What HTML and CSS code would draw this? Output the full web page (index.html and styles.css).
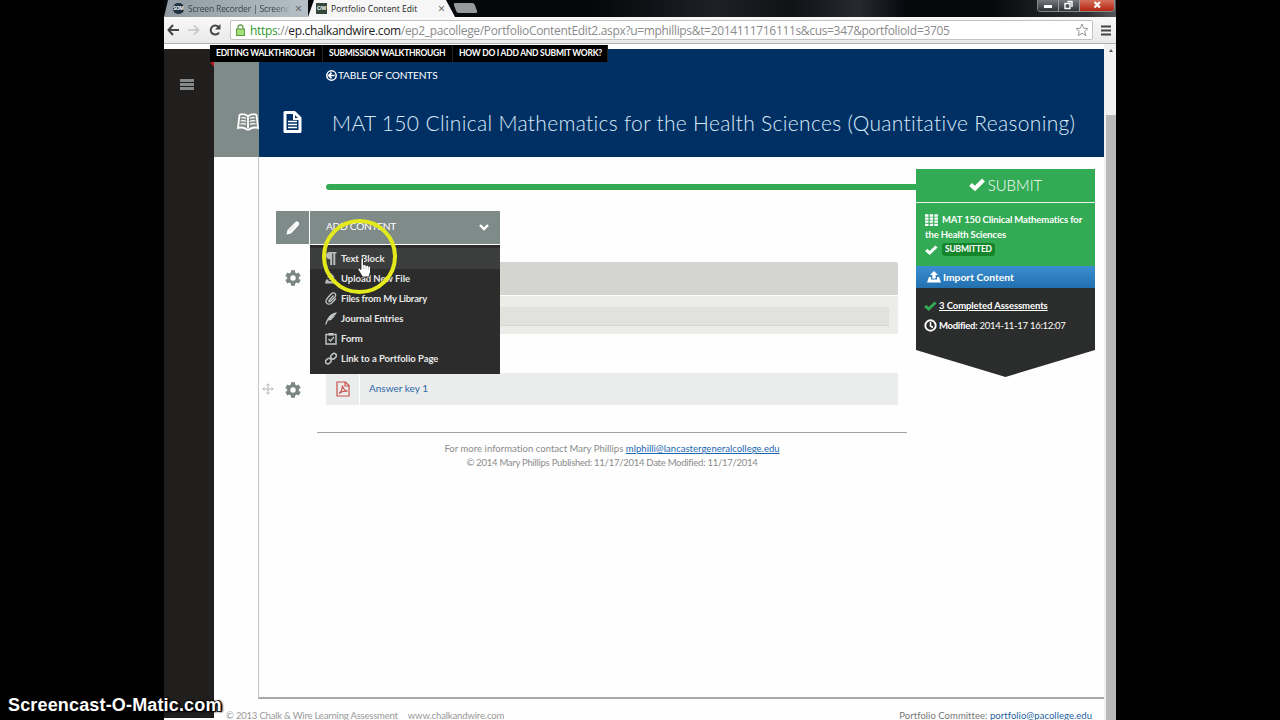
FILE: index.html
```
<!DOCTYPE html>
<html lang="en">
<head>
  <meta charset="UTF-8">
  <meta name="viewport" content="width=device-width, initial-scale=1.0">
  <link rel="stylesheet" href="styles.css">
  <title>Portfolio Content Edit</title>
</head>
<body>

<div class="browser">
  <div class="tabs">
    <div class="tab tab-back">
      <span class="favicon favicon-som">SOM</span>
      <span class="tab-title fade">Screen Recorder | Screenc</span>
      <span class="tab-close">×</span>
    </div>
    <div class="tab tab-active">
      <span class="favicon favicon-cw">C/W</span>
      <span class="tab-title">Portfolio Content Edit</span>
      <span class="tab-close">×</span>
    </div>
    <div class="new-tab"></div>
    <div class="window-buttons">
      <span class="win"><svg width="20" height="12" viewBox="0 0 20 12"><path d="M6 5h8v3H6z" fill="#fff"/></svg></span>
      <span class="win"><svg width="20" height="12" viewBox="0 0 20 12" fill="none" stroke="#fff" stroke-width="1.4"><path d="M6 3.500h5v5H6zM8.500 1.500h4.500v5.500"/></svg></span>
      <span class="win win-close"><svg width="34" height="12" viewBox="0 0 34 12"><path d="M14.500 2l5.500 5.500M20 2l-5.500 5.500" stroke="#fff" stroke-width="2.200"/></svg></span>
    </div>
  </div>

  <div class="toolbar">
    <svg width="12" height="12" viewBox="0 0 12 12" fill="none" stroke="#444" stroke-width="2"><path d="M6 1L1.500 6L6 11M1.500 6H12"/></svg>
    <svg width="12" height="12" viewBox="0 0 12 12" fill="none" stroke="#c4c4c4" stroke-width="1.600"><path d="M6 1.500L10.500 6L6 10.500M10.500 6H0"/></svg>
    <svg width="12" height="12" viewBox="0 0 12 12" fill="none" stroke="#444" stroke-width="2"><path d="M10 8.500A4.500 4.500 0 1 1 9.500 3"/><path d="M11.500 0v5.500H6z" fill="#444" stroke="none"/></svg>
    <div class="address">
      <svg width="9" height="12" viewBox="0 0 9 12"><path d="M2 6V3.500a2.500 2.500 0 0 1 5 0V6" fill="none" stroke="#6a9e52" stroke-width="1.300"/><rect x=".5" y="5" width="8" height="6.500" fill="#a4e07a" stroke="#5b9a3f"/></svg>
      <span class="url"><span class="scheme">https</span>://<span class="host">ep.chalkandwire.com</span>/ep2_pacollege/PortfolioContentEdit2.aspx?u=mphillips&amp;t=2014111716111s&amp;cus=347&amp;portfolioId=3705</span>
      <svg width="14" height="14" viewBox="0 0 14 14"><path d="M7 1l1.700 4.200 4.300.3-3.300 2.800 1.100 4.400L7 10.200 3.200 12.700l1.100-4.400L1 5.500l4.300-.3z" fill="#fff" stroke="#999"/></svg>
    </div>
    <svg class="wrench" width="10" height="11" viewBox="0 0 10 11"><path d="M0 1.500h10M0 5.500h10M0 9.500h10" stroke="#444" stroke-width="2.200"/></svg>
  </div>

  <div class="page">
    <div class="walkthroughs">
      <a class="w1">EDITING WALKTHROUGH</a>
      <a class="w2">SUBMISSION WALKTHROUGH</a>
      <a class="w3">HOW DO I ADD AND SUBMIT WORK?</a>
      <i class="corner"></i>
    </div>

    <div class="sidebar">
      <svg width="14" height="11" viewBox="0 0 14 11"><path d="M0 1.500h14M0 5.500h14M0 9.500h14" stroke="#85898a" stroke-width="3"/></svg>
    </div>

    <div class="main">
      <div class="content">
        <div class="book-tab">
          <svg width="22" height="18" viewBox="0 0 22 18" fill="none" stroke="#fff" stroke-width="1.800"><path d="M11 3Q6 0 2.500 2L1 15Q6 13.500 10 16.500h2Q16 13.500 21 15L19.500 2Q16 0 11 3V15"/><path d="M4 5q3-1 5 .5M3.700 8q3-1 5.300.5M3.500 11q3-1 5.500.5M18 5q-3-1-5 .5M18.300 8q-3-1-5.300.5M18.500 11q-3-1-5.500.5" stroke-width="1.300"/></svg>
        </div>

        <div class="sheet">
          <div class="heading">
            <svg class="doc" width="19" height="22" viewBox="0 0 19 22"><path d="M2 1.500h9.500L17 7v13.500H2z" fill="#003063" stroke="#fff" stroke-width="3" stroke-linejoin="round"/><path d="M11 1v7h7" fill="none" stroke="#fff" stroke-width="2"/><path d="M5 10.500h9M5 13.500h9M5 16.500h9" stroke="#fff" stroke-width="1.500"/></svg>
            <div class="heading-text">
              <a class="toc"><svg width="11" height="11" viewBox="0 0 11 11" fill="none" stroke="#fff"><circle cx="5.500" cy="5.500" r="4.700" stroke-width="1.500"/><path d="M5.500 2.700L2.800 5.500l2.700 2.800M3 5.500h5.700" stroke-width="1.700"/></svg><span>TABLE OF CONTENTS</span></a>
              <h1>MAT 150 Clinical Mathematics for the Health Sciences (Quantitative Reasoning)</h1>
            </div>
          </div>

          <div class="body">
            <div class="blocks">
              <div class="progress"></div>

              <div class="add-bar">
                <div class="pencil"><svg width="16" height="16" viewBox="0 0 16 16"><path d="M1.500 14.500l1-4.500L10.500 2q1.500-1.500 3 0t0 3.500L6 13.500z" fill="#fff"/><path d="M4.500 11L10 5.500" stroke="#a9b2b0" stroke-width=".7"/></svg></div>
                <div class="add-content">
                  <span>ADD CONTENT</span>
                  <svg width="10" height="7" viewBox="0 0 10 7"><path d="M1 1l4 4 4-4" fill="none" stroke="#fff" stroke-width="2.400"/></svg>
                  <ul class="menu">
                    <li class="active"><svg width="12" height="13" viewBox="0 0 12 13"><path d="M11.500 0v1.500H10.300V13H8.300V1.500H7.200V13H5.200V7.200Q1 7 1 3.500T5 0z" fill="#b8bcbb"/></svg><span>Text Block</span></li>
                    <li><svg width="12" height="13" viewBox="0 0 12 13"><path d="M6 1l4 4.500H7.500V8h-3V5.500H2zM1 7.500h2.500v1.700h5V7.500H11l1 4H0z" fill="#b8bcbb"/></svg><span>Upload New File</span></li>
                    <li class="library"><svg width="12" height="13" viewBox="0 0 12 13"><path d="M8.500 3.500L4 8.500q-.5 1.500 1 1.200L10 5q1.500-2.500-.3-3.700T6 2L1.800 7Q0 10 2 11.500t4.500-.3L11 6.500" fill="none" stroke="#c2c6c5" stroke-width="1.300"/></svg><span>Files from My Library</span></li>
                    <li class="journal"><svg width="12" height="13" viewBox="0 0 12 13"><path d="M0 12.500Q2.500 5 6 2.500T12 .5Q10.500 2 10.500 3L8 4.200h2Q9 6 6 6.500h2Q6 9 3 8.500L1.300 12.500z" fill="#c2c6c5"/></svg><span>Journal Entries</span></li>
                    <li><svg width="12" height="13" viewBox="0 0 12 13"><path d="M1 2.500h10v9.500H1z" fill="none" stroke="#c2c6c5" stroke-width="1.400"/><path d="M3.500 1h5v2.500h-5z" fill="#c2c6c5"/><path d="M3.500 7l2 2 3.500-4" fill="none" stroke="#c2c6c5" stroke-width="1.300"/></svg><span>Form</span></li>
                    <li class="link"><svg width="12" height="13" viewBox="0 0 12 13"><g fill="none" stroke="#c2c6c5" stroke-width="1.500"><rect x="5.500" y="2" width="6" height="4.500" rx="2.200" transform="rotate(-45 8.500 4.200)"/><rect x=".3" y="6.900" width="6" height="4.500" rx="2.200" transform="rotate(-45 3.300 9.100)"/></g></svg><span>Link to a Portfolio Page</span></li>
                  </ul>
                </div>
              </div>

              <div class="row row-table">
                <svg class="gear" width="16" height="16" viewBox="0 0 16 16"><path d="M8 .3v15.400M1.300 4.150l13.400 7.700M1.300 11.850l13.400-7.700" stroke="#7b8684" stroke-width="4"/><circle cx="8" cy="8" r="4.300" fill="#fff" stroke="#7b8684" stroke-width="3.200"/></svg>
                <div class="table-block">
                  <div class="table-head"></div>
                  <div class="table-body"><div class="table-cell"></div></div>
                </div>
              </div>

              <div class="row row-file">
                <svg class="move" width="12" height="12" viewBox="0 0 12 12"><path d="M6 1v10M1 6h10M4.300 2.500L6 .8l1.700 1.700M4.300 9.500L6 11.200l1.700-1.700M2.500 4.300L.8 6l1.700 1.700M9.500 4.300L11.200 6 9.500 7.700" fill="none" stroke="#b3b7b7"/></svg>
                <svg class="gear" width="16" height="16" viewBox="0 0 16 16"><path d="M8 .3v15.400M1.300 4.150l13.400 7.700M1.300 11.850l13.400-7.700" stroke="#7b8684" stroke-width="4"/><circle cx="8" cy="8" r="4.300" fill="#fff" stroke="#7b8684" stroke-width="3.200"/></svg>
                <div class="file-block">
                  <div class="file-icon"><svg width="14" height="16" viewBox="0 0 14 16" fill="none" stroke="#c6524e" stroke-width="1.200"><path d="M1 1h8.500L13 4.500V15H1zM9 1v4h4"/><path d="M3 12.500Q6 10.500 6.500 4.500 7 9 11.500 10.200 6.500 9.500 3 12.500"/></svg></div>
                  <a>Answer key 1</a>
                </div>
              </div>

              <div class="page-foot">
                <p>For more information contact Mary Phillips <a>mlphilli@lancastergeneralcollege.edu</a></p>
                <p class="dates">© 2014 Mary Phillips Published: 11/17/2014 Date Modified: 11/17/2014</p>
              </div>
            </div>

            <div class="submit-panel">
              <div class="submit"><svg width="16" height="13" viewBox="0 0 16 13"><path d="M1.500 6.500l4.500 4L14.500 2" fill="none" stroke="#fff" stroke-width="4"/></svg><span>SUBMIT</span></div>
              <div class="assignment">
                <div class="line"><svg width="13" height="12" viewBox="0 0 13 12"><path d="M0 1.500h13M0 4.600h13M0 7.700h13M0 10.800h13" stroke="#fff" stroke-width="2.300" stroke-dasharray="3.500 1.200"/></svg><span>MAT 150 Clinical Mathematics for</span></div>
                <div class="line">the Health Sciences</div>
                <div class="line"><svg width="13" height="10" viewBox="0 0 13 10"><path d="M1.200 5l3.500 3L11.500 1.500" fill="none" stroke="#fff" stroke-width="3"/></svg><span class="badge">SUBMITTED</span></div>
              </div>
              <div class="import"><svg width="14" height="12" viewBox="0 0 14 12"><path d="M7 0l4 4H8.700v3.500H5.300V4H3zM2 6h2v2.500h6V6h2l2 5.500H0z" fill="#fff"/></svg><span>Import Content</span></div>
              <div class="info">
                <div class="info-line completed"><svg width="13" height="10" viewBox="0 0 13 10"><path d="M1.200 5l3.500 3L11.500 1.500" fill="none" stroke="#32a854" stroke-width="3"/></svg><span>3 Completed Assessments</span></div>
                <div class="info-line modified"><svg width="13" height="13" viewBox="0 0 13 13" fill="none" stroke="#fff" stroke-width="1.900"><circle cx="6.500" cy="6.500" r="5.200"/><path d="M6.500 3v4l2.500 1.500" stroke-width="1.500"/></svg><span><b>Modified:</b> 2014-11-17 16:12:07</span></div>
              </div>
            </div>
          </div>
        </div>
      </div>

      <div class="site-foot">
        <span class="f1">© 2013 Chalk &amp; Wire Learning Assessment</span>
        <span class="f2">www.chalkandwire.com</span>
        <span class="f3">Portfolio Committee: <a>portfolio@pacollege.edu</a></span>
      </div>
    </div>

    <div class="scrollbar">
      <i class="scroll-up"></i>
      <div class="thumb"></div>
    </div>
  </div>
</div>

<!-- recorder overlays -->
<div class="halo"></div>
<svg class="pointer" width="15" height="21" viewBox="0 0 15 21"><path d="M4 1.500Q5.500 0 6.500 1.500V8q1.500-1 2.500.5 1.500-.8 2.500.7 2-.5 2 1.300V15l-1.500 5H5.500L1 12.500Q.5 10.500 2.200 11L4 12.500z" fill="#fff" stroke="#222" stroke-width=".9"/><path d="M6.700 9v3M9.200 9.500V12M11.500 10v2.500" stroke="#aaa" stroke-width=".7"/></svg>
<div class="watermark">Screencast-O-Matic.com</div>

</body>
</html>
```
FILE: styles.css
```
* {
  box-sizing: border-box;
}
body {
  margin: 0;
  width: 1280px;
  height: 720px;
  overflow: hidden;
  background: #000;
  font-family: Lato, "Open Sans", sans-serif;
  position: relative;
}
svg {
  display: block;
  flex: none;
}
h1, p, ul {
  margin: 0;
  padding: 0;
  font-weight: normal;
}
span, a, p, h1 {
  white-space: nowrap;
}
.browser {
  width: 952px;
  height: 720px;
  margin-left: 164px;
  display: flex;
  flex-direction: column;
}

/* tab strip */
.tabs {
  height: 17px;
  display: flex;
  background: linear-gradient(90deg, #05070b, #05070b 45%, #1d2024 58%, #101216 66%, #262a30 73%, #06080c 78%, #06080c 87%, #303236 97%, #55575a);
}
.tab {
  display: flex;
  align-items: center;
  font: 8.6px "Open Sans", sans-serif;
  color: #3b444a;
}
.tab-back {
  width: 144px;
  padding-left: 9px;
  background: linear-gradient(90deg, #8f9aa1, #b4bfc6);
  clip-path: polygon(4px 0, 100% 0, 100% 100%, 0 100%);
}
.tab-active {
  width: 147px;
  padding-left: 8px;
  background: #f6f6f6;
  clip-path: polygon(6px 0, 138px 0, 100% 100%, 0 100%);
}
.favicon {
  width: 11px;
  height: 11px;
  margin-right: 4px;
  font-weight: bold;
  font-size: 5px;
  line-height: 11px;
  text-align: center;
  letter-spacing: -0.3px;
  color: #fff;
}
.favicon-som {
  background: #1f3340;
  border-radius: 5px;
}
.favicon-cw {
  background: #34493a;
}
.tab-title {
  width: 104px;
  margin-right: 3px;
}
.tab-active .tab-title {
  color: #222;
}
.tab .fade {
  width: 104px;
  margin-right: 3px;
  letter-spacing: -0.2px;
  -webkit-mask-image: linear-gradient(90deg, #000 82%, transparent);
}
.tab-close {
  font-size: 12px;
  color: #555;
}
.new-tab {
  width: 21px;
  height: 10px;
  margin-top: 3px;
  background: #96999b;
  transform: skewX(20deg);
  border-radius: 2px;
}
.window-buttons {
  display: flex;
  height: 12px;
  margin-left: auto;
  margin-right: 1px;
  border: 1px solid #85888b;
  border-top: 0;
  border-radius: 0 0 4px 4px;
  overflow: hidden;
}
.win {
  background: linear-gradient(#75787c, #2e3135);
  border-right: 1px solid #9a9da0;
}
.win-close {
  background: linear-gradient(#d4705c, #b3240f);
  border-right: 0;
}

/* address bar */
.toolbar {
  height: 27px;
  display: flex;
  align-items: center;
  padding: 0 5px 0 3px;
  background: linear-gradient(#f8f8f8, #e9e9e9);
  border-bottom: 1px solid #b0b0b0;
}
.toolbar > svg {
  margin-right: 9px;
}
.address {
  flex: 1;
  height: 20px;
  display: flex;
  align-items: center;
  padding: 0 3px 0 5px;
  background: #fff;
  border: 1px solid #c2c2c2;
  border-radius: 2px;
}
.url {
  flex: 1;
  margin-left: 5px;
  font: 12px "Open Sans", sans-serif;
  letter-spacing: -0.335px;
  color: #8b8b8b;
}
.scheme {
  color: #2f9a2f;
}
.host {
  color: #222;
}
.toolbar > .wrench {
  margin: 0 0 0 8px;
}

/* page */
.page {
  flex: 1;
  min-height: 0;
  display: flex;
  position: relative;
  background: #fefefe;
}
.walkthroughs {
  position: absolute;
  left: 46px;
  top: 1px;
  width: 398px;
  height: 17px;
  display: flex;
  background: #000;
  color: #fff;
  font-size: 8.5px;
  font-weight: bold;
  line-height: 17px;
  letter-spacing: -0.26px;
}
.walkthroughs a {
  padding-left: 6px;
  border-right: 1px solid #222;
}
.w1 { width: 113px; }
.w2 { width: 130px; }
.w3 { width: 155px; }
.corner {
  position: absolute;
  left: 0;
  top: 17px;
  border-top: 5px solid #c4161c;
  border-left: 4px solid transparent;
}
.sidebar {
  width: 50px;
  margin: 5px 0 2px;
  padding: 30px 0 0 16px;
  background: #211f1e;
}
.main {
  width: 890px;
  margin-top: 5px;
}
.content {
  display: flex;
  height: 650px;
}
.book-tab {
  width: 45px;
  height: 108px;
  padding: 64px 0 0 23px;
  background: #7f8b89;
  overflow: hidden;
}
.sheet {
  flex: 1;
  display: flex;
  flex-direction: column;
}
.heading {
  height: 108px;
  display: flex;
  padding-left: 24px;
  background: #003063;
  color: #fff;
}
.doc {
  margin-top: 62px;
}
.heading-text {
  margin-left: 24px;
}
.toc {
  display: flex;
  align-items: center;
  height: 14px;
  margin-top: 19px;
  font-size: 10.2px;
  letter-spacing: -0.18px;
}
.toc svg {
  margin-right: 1px;
}
h1 {
  margin: 26px 0 0 6px;
  font-size: 21px;
  line-height: 30px;
  font-weight: 300;
  letter-spacing: 0.32px;
  color: #dcebfa;
}
.body {
  flex: 1;
  display: flex;
  margin-left: -1px;
  border-left: 1px solid #c4c6c6;
  border-bottom: 2px solid #a8a8a8;
}
.blocks {
  width: 657px;
}
.progress {
  height: 6px;
  margin: 27px 0 0 67px;
  background: #33ab55;
  border-radius: 3px 0 0 3px;
}
.add-bar {
  display: flex;
  gap: 1px;
  height: 33px;
  margin: 21px 0 0 17px;
}
.pencil {
  width: 33px;
  padding: 9px 0 0 9px;
  background: #7f8b89;
}
.add-content {
  width: 190px;
  display: flex;
  align-items: center;
  justify-content: space-between;
  padding: 0 11px 0 16px;
  background: #7f8b89;
  color: #fff;
  font-size: 10.2px;
  letter-spacing: -0.3px;
  position: relative;
}
.add-content > span {
  margin-bottom: 3px;
}
.menu {
  position: absolute;
  left: 0;
  top: 34px;
  width: 190px;
  height: 129px;
  padding-top: 3px;
  background: #2b2c2b;
  list-style: none;
  letter-spacing: -0.05px;
  z-index: 2;
}
.menu li {
  height: 20.1px;
  display: flex;
  align-items: center;
  gap: 4px;
  padding: 0 0 1px 15px;
  font-size: 9.5px;
  font-weight: bold;
  color: #e8e8e8;
}
.menu .active {
  height: 21px;
  background: #3c3e3d;
}
.menu .library {
  letter-spacing: -0.18px;
}
.menu .journal {
  letter-spacing: 0;
}
.row {
  display: flex;
}
.row-table {
  margin: 18px 0 0 26px;
}
.gear {
  margin-top: 9px;
}
.row-table .gear {
  margin-top: 8px;
}
.table-block {
  width: 572px;
  margin-left: 25px;
}
.table-head {
  height: 33px;
  background: #d4d5d1;
  border-radius: 2px 2px 0 0;
}
.table-body {
  height: 38px;
  margin-top: 1px;
  padding: 11px 9px 8px;
  background: #ecede8;
}
.table-cell {
  height: 19px;
  background: #e1e2dd;
  border-bottom: 1px solid #d5d6d1;
}
.row-file {
  margin: 39px 0 0 3px;
}
.move {
  margin: 10px 11px 0 0;
}
.file-block {
  display: flex;
  align-items: center;
  width: 572px;
  height: 32px;
  margin-left: 25px;
  background: #ebecec;
  font-size: 10px;
  color: #2d69a8;
}
.file-block a {
  margin-bottom: 2px;
}
.file-icon {
  width: 34px;
  height: 32px;
  margin-right: 9px;
  padding: 8px 0 0 10px;
  border-right: 1px solid #fff;
}
.page-foot {
  width: 590px;
  margin: 27px 0 0 58px;
  padding-top: 9px;
  border-top: 1px solid #9aa3a6;
  text-align: center;
  font-size: 9.5px;
  line-height: 14px;
  letter-spacing: 0.03px;
  color: #8b8b8b;
}
.dates {
  letter-spacing: -0.26px;
}
.page-foot a {
  color: #1c67b3;
  text-decoration: underline;
}

/* submit panel */
.submit-panel {
  width: 179px;
  height: 208px;
  margin-top: 12px;
  background: #2b2c2c;
  color: #fff;
  clip-path: polygon(0 0, 100% 0, 100% 181px, 50% 100%, 0 181px);
}
.submit {
  height: 34px;
  display: flex;
  align-items: center;
  justify-content: center;
  gap: 3px;
  padding-bottom: 2px;
  background: #33ab55;
  border-bottom: 1px solid #e6f5ea;
  font-size: 15px;
  font-weight: 300;
}
.assignment {
  height: 63px;
  padding: 9px 0 0 9px;
  background: #33ab55;
  font-size: 9.5px;
  font-weight: bold;
  letter-spacing: -0.12px;
}
.line {
  height: 15px;
  display: flex;
  align-items: center;
  gap: 4px;
  white-space: nowrap;
}
.badge {
  height: 13px;
  padding: 0 3px;
  background: #15852c;
  border-radius: 3px;
  font-size: 8.5px;
  line-height: 13px;
  letter-spacing: -0.2px;
}
.import {
  height: 22px;
  display: flex;
  align-items: center;
  gap: 2px;
  padding-left: 11px;
  background: linear-gradient(#3b8fd0, #2370b0);
  font-size: 10.3px;
  font-weight: bold;
}
.info {
  padding: 8px 0 0 8px;
  font-size: 9.5px;
}
.info-line {
  height: 20px;
  display: flex;
  align-items: center;
  gap: 2px;
}
.completed {
  height: 19px;
  font-weight: bold;
  letter-spacing: -0.08px;
}
.completed span {
  text-decoration: underline;
}
.modified {
  letter-spacing: -0.28px;
}

.site-foot {
  display: flex;
  height: 21px;
  padding: 10px 12px 0 12px;
  font-size: 9.5px;
  line-height: 14px;
  letter-spacing: -0.2px;
  color: #999;
}
.f2 {
  margin-left: 10px;
  letter-spacing: -0.15px;
}
.f3 {
  margin-left: auto;
  letter-spacing: 0.04px;
  color: #777;
}
.f3 a {
  color: #1c5f9f;
}
.scrollbar {
  width: 12px;
  display: flex;
  flex-direction: column;
  align-items: center;
  background: #f1f1f1;
}
.scroll-up {
  margin: 5px 0 0 1px;
  border: 2.5px solid transparent;
  border-top: 0;
  border-bottom: 3px solid #555;
}
.thumb {
  flex: 1;
  width: 10px;
  margin: 63px 0 0 1px;
  background: #b9b9b9;
}

.halo {
  position: absolute;
  left: 322px;
  top: 219px;
  width: 75px;
  height: 75px;
  border: 4px solid #e3e91b;
  border-radius: 50%;
  z-index: 3;
}
.pointer {
  position: absolute;
  left: 357px;
  top: 257px;
  z-index: 4;
}
.watermark {
  position: absolute;
  left: 8px;
  top: 695px;
  font: bold 18px/20px "Liberation Sans", Arial, sans-serif;
  letter-spacing: 0.16px;
  color: #fff;
  text-shadow: 1px 1px 1px #000, -1px 1px 1px #000, 1px -1px 1px #000, 2px 1px 2px #000;
}
```
